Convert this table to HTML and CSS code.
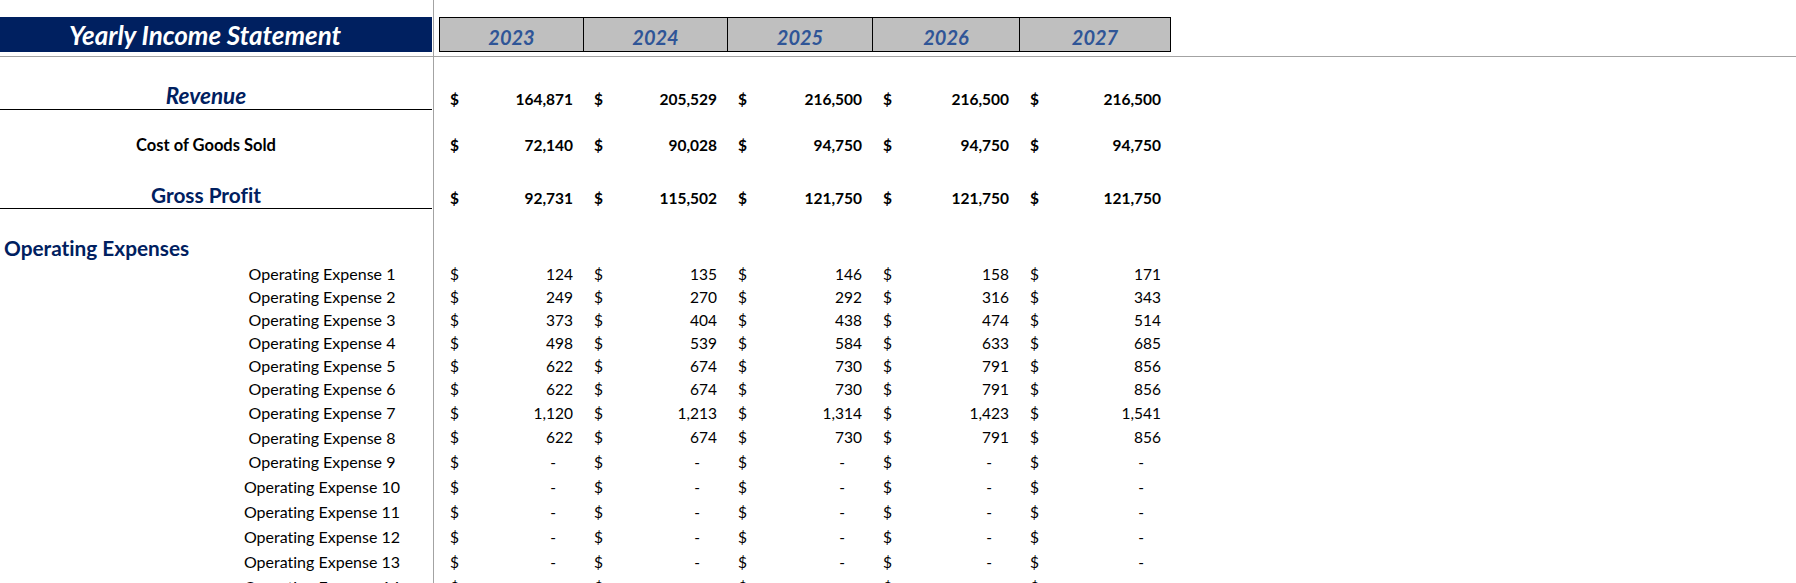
FILE: index.html
```html
<!DOCTYPE html>
<html lang="en">
<head>
<meta charset="utf-8">
<title>Yearly Income Statement</title>
<link rel="stylesheet" href="styles.css">
</head>
<body>
<div class="sheet">
  <div class="row header">
    <div class="title-bar">Yearly Income Statement</div>
    <div class="years">
      <div class="year">2023</div>
      <div class="year">2024</div>
      <div class="year">2025</div>
      <div class="year">2026</div>
      <div class="year">2027</div>
    </div>
  </div>

  <div class="row rev bold">
    <div class="lbl">Revenue</div><div></div>
    <div class="v"><span>$</span><span>164,871</span></div>
    <div class="v"><span>$</span><span>205,529</span></div>
    <div class="v"><span>$</span><span>216,500</span></div>
    <div class="v"><span>$</span><span>216,500</span></div>
    <div class="v"><span>$</span><span>216,500</span></div>
  </div>

  <div class="row cogs bold">
    <div class="lbl">Cost of Goods Sold</div><div></div>
    <div class="v"><span>$</span><span>72,140</span></div>
    <div class="v"><span>$</span><span>90,028</span></div>
    <div class="v"><span>$</span><span>94,750</span></div>
    <div class="v"><span>$</span><span>94,750</span></div>
    <div class="v"><span>$</span><span>94,750</span></div>
  </div>

  <div class="row gp bold">
    <div class="lbl">Gross Profit</div><div></div>
    <div class="v"><span>$</span><span>92,731</span></div>
    <div class="v"><span>$</span><span>115,502</span></div>
    <div class="v"><span>$</span><span>121,750</span></div>
    <div class="v"><span>$</span><span>121,750</span></div>
    <div class="v"><span>$</span><span>121,750</span></div>
  </div>

  <div class="row oph">
    <div class="lbl">Operating Expenses</div>
  </div>

  <div class="row exp h23">
    <div class="lbl">Operating Expense 1</div><div></div>
    <div class="v"><span>$</span><span>124</span></div>
    <div class="v"><span>$</span><span>135</span></div>
    <div class="v"><span>$</span><span>146</span></div>
    <div class="v"><span>$</span><span>158</span></div>
    <div class="v"><span>$</span><span>171</span></div>
  </div>
  <div class="row exp h23">
    <div class="lbl">Operating Expense 2</div><div></div>
    <div class="v"><span>$</span><span>249</span></div>
    <div class="v"><span>$</span><span>270</span></div>
    <div class="v"><span>$</span><span>292</span></div>
    <div class="v"><span>$</span><span>316</span></div>
    <div class="v"><span>$</span><span>343</span></div>
  </div>
  <div class="row exp h23">
    <div class="lbl">Operating Expense 3</div><div></div>
    <div class="v"><span>$</span><span>373</span></div>
    <div class="v"><span>$</span><span>404</span></div>
    <div class="v"><span>$</span><span>438</span></div>
    <div class="v"><span>$</span><span>474</span></div>
    <div class="v"><span>$</span><span>514</span></div>
  </div>
  <div class="row exp h23">
    <div class="lbl">Operating Expense 4</div><div></div>
    <div class="v"><span>$</span><span>498</span></div>
    <div class="v"><span>$</span><span>539</span></div>
    <div class="v"><span>$</span><span>584</span></div>
    <div class="v"><span>$</span><span>633</span></div>
    <div class="v"><span>$</span><span>685</span></div>
  </div>
  <div class="row exp h23">
    <div class="lbl">Operating Expense 5</div><div></div>
    <div class="v"><span>$</span><span>622</span></div>
    <div class="v"><span>$</span><span>674</span></div>
    <div class="v"><span>$</span><span>730</span></div>
    <div class="v"><span>$</span><span>791</span></div>
    <div class="v"><span>$</span><span>856</span></div>
  </div>
  <div class="row exp h23">
    <div class="lbl">Operating Expense 6</div><div></div>
    <div class="v"><span>$</span><span>622</span></div>
    <div class="v"><span>$</span><span>674</span></div>
    <div class="v"><span>$</span><span>730</span></div>
    <div class="v"><span>$</span><span>791</span></div>
    <div class="v"><span>$</span><span>856</span></div>
  </div>
  <div class="row exp h25">
    <div class="lbl">Operating Expense 7</div><div></div>
    <div class="v"><span>$</span><span>1,120</span></div>
    <div class="v"><span>$</span><span>1,213</span></div>
    <div class="v"><span>$</span><span>1,314</span></div>
    <div class="v"><span>$</span><span>1,423</span></div>
    <div class="v"><span>$</span><span>1,541</span></div>
  </div>
  <div class="row exp h24">
    <div class="lbl">Operating Expense 8</div><div></div>
    <div class="v"><span>$</span><span>622</span></div>
    <div class="v"><span>$</span><span>674</span></div>
    <div class="v"><span>$</span><span>730</span></div>
    <div class="v"><span>$</span><span>791</span></div>
    <div class="v"><span>$</span><span>856</span></div>
  </div>
  <div class="row exp h25">
    <div class="lbl">Operating Expense 9</div><div></div>
    <div class="v"><span>$</span><span class="dash">-</span></div>
    <div class="v"><span>$</span><span class="dash">-</span></div>
    <div class="v"><span>$</span><span class="dash">-</span></div>
    <div class="v"><span>$</span><span class="dash">-</span></div>
    <div class="v"><span>$</span><span class="dash">-</span></div>
  </div>
  <div class="row exp h25">
    <div class="lbl">Operating Expense 10</div><div></div>
    <div class="v"><span>$</span><span class="dash">-</span></div>
    <div class="v"><span>$</span><span class="dash">-</span></div>
    <div class="v"><span>$</span><span class="dash">-</span></div>
    <div class="v"><span>$</span><span class="dash">-</span></div>
    <div class="v"><span>$</span><span class="dash">-</span></div>
  </div>
  <div class="row exp h25">
    <div class="lbl">Operating Expense 11</div><div></div>
    <div class="v"><span>$</span><span class="dash">-</span></div>
    <div class="v"><span>$</span><span class="dash">-</span></div>
    <div class="v"><span>$</span><span class="dash">-</span></div>
    <div class="v"><span>$</span><span class="dash">-</span></div>
    <div class="v"><span>$</span><span class="dash">-</span></div>
  </div>
  <div class="row exp h25">
    <div class="lbl">Operating Expense 12</div><div></div>
    <div class="v"><span>$</span><span class="dash">-</span></div>
    <div class="v"><span>$</span><span class="dash">-</span></div>
    <div class="v"><span>$</span><span class="dash">-</span></div>
    <div class="v"><span>$</span><span class="dash">-</span></div>
    <div class="v"><span>$</span><span class="dash">-</span></div>
  </div>
  <div class="row exp h25">
    <div class="lbl">Operating Expense 13</div><div></div>
    <div class="v"><span>$</span><span class="dash">-</span></div>
    <div class="v"><span>$</span><span class="dash">-</span></div>
    <div class="v"><span>$</span><span class="dash">-</span></div>
    <div class="v"><span>$</span><span class="dash">-</span></div>
    <div class="v"><span>$</span><span class="dash">-</span></div>
  </div>
  <div class="row exp h25">
    <div class="lbl">Operating Expense 14</div><div></div>
    <div class="v"><span>$</span><span class="dash">-</span></div>
    <div class="v"><span>$</span><span class="dash">-</span></div>
    <div class="v"><span>$</span><span class="dash">-</span></div>
    <div class="v"><span>$</span><span class="dash">-</span></div>
    <div class="v"><span>$</span><span class="dash">-</span></div>
  </div>
</div>
</body>
</html>
```
FILE: styles.css
```css
* {
  box-sizing: border-box;
  margin: 0;
  padding: 0;
}

html, body {
  height: 100%;
  overflow: hidden;
}

body {
  background: #ffffff;
  color: #000000;
  font-family: Lato, "Open Sans", sans-serif;
  font-variant-ligatures: none;
}

.sheet {
  height: 583px;
  overflow: hidden;
  background: linear-gradient(to right, transparent 433px, #a3a3a3 433px, #a3a3a3 434px, transparent 434px);
}

.row {
  display: grid;
  grid-template-columns: 432px 7px 144px 144px 145px 147px 152px;
}

/* header */
.header {
  height: 57px;
  padding-top: 17px;
  border-bottom: 1px solid #a3a3a3;
  align-items: start;
}

.title-bar {
  height: 35px;
  background: #002060;
  color: #ffffff;
  font-weight: 700;
  font-style: italic;
  font-size: 26px;
  display: flex;
  align-items: center;
  justify-content: center;
  padding-right: 22px;
}

.years {
  grid-column: 3 / 8;
  height: 35px;
  display: grid;
  grid-template-columns: 143px 144px 145px 147px 151px;
  border: 1px solid #000000;
  background: #bfbfbf;
}

.year {
  display: flex;
  align-items: center;
  justify-content: center;
  padding-top: 4px;
  font-size: 20px;
  font-weight: 700;
  font-style: italic;
  color: #2f5597;
}

.year + .year {
  border-left: 1px solid #000000;
}

/* generic cells */
.lbl {
  display: flex;
  align-items: center;
  justify-content: center;
  white-space: nowrap;
}

.v {
  display: flex;
  align-items: center;
  justify-content: space-between;
  padding-left: 11px;
  padding-right: 10px;
  font-size: 15.5px;
  white-space: nowrap;
}

.bold .v {
  font-weight: 700;
}

.dash {
  padding-right: 17px;
}

/* revenue */
.rev {
  height: 53px;
}
.rev .lbl {
  border-bottom: 1px solid #000000;
  padding-top: 24px;
  padding-right: 20px;
  color: #002060;
  font-weight: 700;
  font-style: italic;
  font-size: 22.5px;
}
.rev .v {
  padding-top: 30px;
}

/* cost of goods sold */
.cogs {
  height: 50px;
}
.cogs .lbl {
  padding-top: 19px;
  padding-right: 20px;
  font-weight: 700;
  font-size: 16.5px;
}
.cogs .v {
  padding-top: 19px;
}

/* gross profit */
.gp {
  height: 49px;
}
.gp .lbl {
  border-bottom: 1px solid #000000;
  padding-top: 20px;
  padding-right: 20px;
  color: #002060;
  font-weight: 700;
  font-size: 20.8px;
}
.gp .v {
  padding-top: 27px;
}

/* operating expenses heading */
.oph {
  height: 53px;
}
.oph .lbl {
  justify-content: flex-start;
  padding-top: 23px;
  padding-left: 4px;
  color: #002060;
  font-weight: 700;
  font-size: 20.8px;
}

/* expense rows */
.exp .lbl {
  padding-left: 212px;
  font-size: 16px;
}

.h23 { height: 23px; }
.h24 { height: 24px; }
.h25 { height: 25px; }
```
